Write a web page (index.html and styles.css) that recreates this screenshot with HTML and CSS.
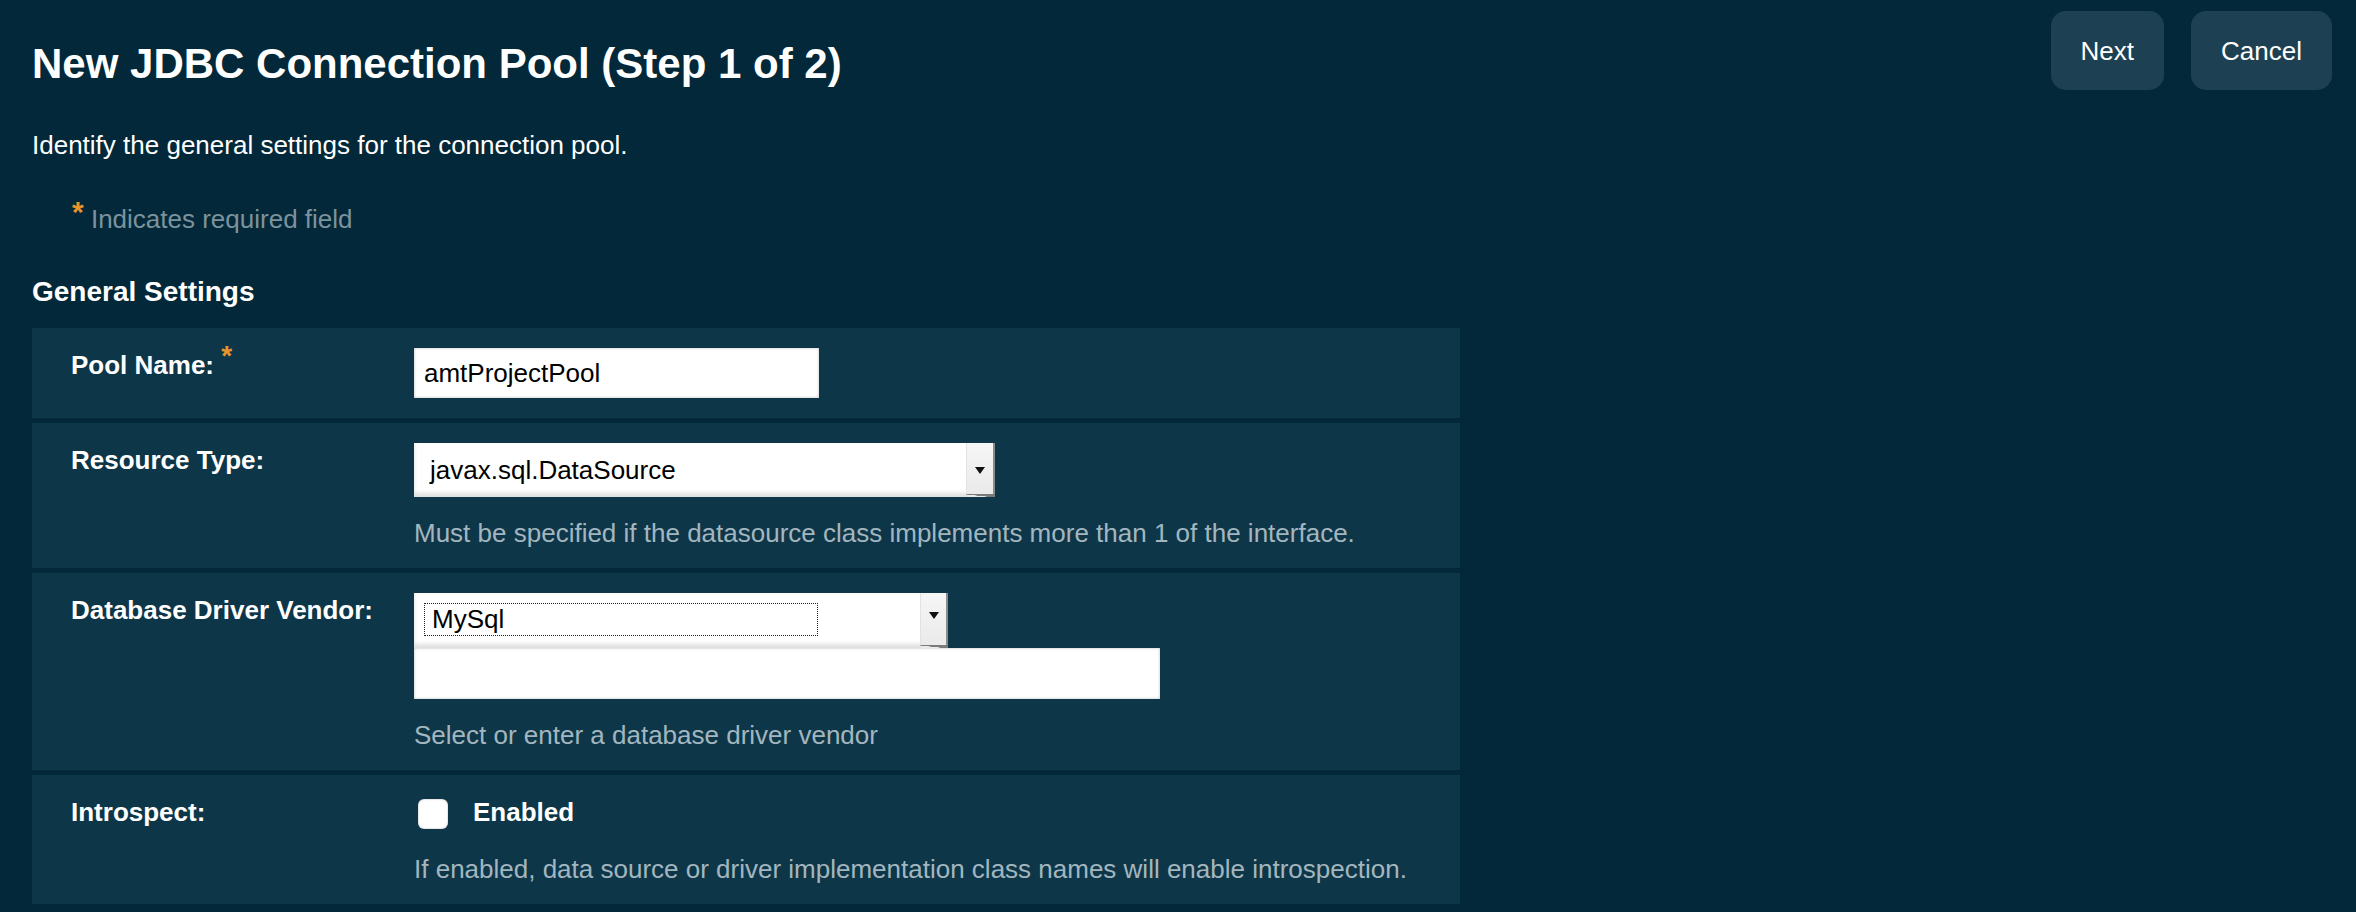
FILE: index.html
```html
<!DOCTYPE html>
<html lang="en">
<head>
<meta charset="utf-8">
<title>New JDBC Connection Pool (Step 1 of 2)</title>
<link rel="stylesheet" href="styles.css">
</head>
<body>
<div class="page">
  <header class="header">
    <h1 class="title">New JDBC Connection Pool (Step 1 of 2)</h1>
    <div class="actions">
      <button class="btn" type="button">Next</button>
      <button class="btn" type="button">Cancel</button>
    </div>
  </header>

  <p class="desc">Identify the general settings for the connection pool.</p>
  <p class="req-note"><span class="req-star">*</span> Indicates required field</p>

  <h2 class="section-title">General Settings</h2>

  <div class="panel">
    <div class="row">
      <div class="label">Pool Name: <span class="label-star">*</span></div>
      <div class="field">
        <input class="text-input pool-input" type="text" value="amtProjectPool">
      </div>
    </div>

    <div class="row">
      <div class="label">Resource Type:</div>
      <div class="field">
        <div class="select resource-select">
          <span class="select-value">javax.sql.DataSource</span>
          <span class="select-btn"><span class="arrow"></span></span>
        </div>
        <div class="help">Must be specified if the datasource class implements more than 1 of the interface.</div>
      </div>
    </div>

    <div class="row">
      <div class="label">Database Driver Vendor:</div>
      <div class="field">
        <div class="select vendor-select">
          <span class="focus-box">MySql</span>
          <span class="select-btn"><span class="arrow"></span></span>
        </div>
        <input class="text-input vendor-input" type="text" value="">
        <div class="help">Select or enter a database driver vendor</div>
      </div>
    </div>

    <div class="row">
      <div class="label">Introspect:</div>
      <div class="field">
        <label class="check-line">
          <span class="checkbox"></span>
          <span class="check-text">Enabled</span>
        </label>
        <div class="help help-check">If enabled, data source or driver implementation class names will enable introspection.</div>
      </div>
    </div>
  </div>
</div>
</body>
</html>
```

FILE: styles.css
```css
* {
  box-sizing: border-box;
}

html, body {
  margin: 0;
  padding: 0;
}

body {
  width: 2356px;
  height: 912px;
  overflow: hidden;
  background: #02283a;
  color: #ffffff;
  font-family: "Liberation Sans", Arial, Helvetica, sans-serif;
  font-size: 26px;
  line-height: 30px;
}

.page {
  padding: 0 24px 0 32px;
}

.header {
  display: flex;
  justify-content: space-between;
  align-items: flex-start;
  height: 90px;
}

.title {
  margin: 40px 0 0;
  font-size: 42px;
  line-height: 48px;
  font-weight: bold;
}

.actions {
  display: flex;
  gap: 27px;
  margin-top: 11px;
}

.btn {
  height: 79px;
  padding: 0 30px;
  border: none;
  border-radius: 15px;
  background: #1d4153;
  color: #ffffff;
  font-family: inherit;
  font-size: 26px;
  line-height: 30px;
}

.desc {
  margin: 40px 0 0;
  height: 30px;
}

.req-note {
  margin: 44px 0 0;
  height: 30px;
  padding-left: 40px;
  color: #7c939d;
}

.req-star {
  color: #e8952c;
  font-size: 30px;
  font-weight: bold;
  line-height: 0;
  vertical-align: 6px;
}

.section-title {
  margin: 42px 0 0;
  font-size: 28px;
  line-height: 32px;
  font-weight: bold;
}

.panel {
  margin-top: 20px;
  width: 1428px;
  display: flex;
  flex-direction: column;
  gap: 5px;
}

.row {
  display: grid;
  grid-template-columns: 382px 1fr;
  background: #0e3649;
  padding: 20px 0 20px;
}

.label {
  padding-left: 39px;
  margin-top: 2px;
  height: 30px;
  font-weight: bold;
}

.label-star {
  color: #e8952c;
  font-size: 28px;
  line-height: 0;
  vertical-align: 9px;
}

.field {
  display: flex;
  flex-direction: column;
  align-items: flex-start;
}

.text-input {
  display: block;
  border: none;
  outline: none;
  margin: 0;
  background: #ffffff;
  color: #000000;
  font-family: inherit;
  font-size: 26px;
  line-height: 30px;
  padding: 0 10px;
  box-shadow: inset 0 0 3px rgba(0, 0, 0, 0.28);
}

.pool-input {
  width: 405px;
  height: 50px;
}

.vendor-input {
  width: 746px;
  height: 51px;
}

.select {
  position: relative;
  display: flex;
  align-items: center;
  background: #ffffff;
  color: #000000;
  box-shadow: inset 0 -4px 4px rgba(0, 0, 0, 0.13);
}

.resource-select {
  width: 581px;
  height: 54px;
  padding-left: 16px;
}

.vendor-select {
  width: 534px;
  height: 55px;
  padding-left: 10px;
  align-items: flex-start;
  padding-top: 10px;
}

.focus-box {
  display: block;
  width: 394px;
  height: 33px;
  border: 1px dotted #222;
  padding-left: 7px;
  line-height: 31px;
}

.select-btn {
  position: absolute;
  top: 0;
  right: 0;
  bottom: 0;
  width: 29px;
  background: linear-gradient(#f6f6f6, #e9e9e9);
  border-right: 2px solid #8b8b8b;
  border-left: 1px solid #e2e2e2;
  display: flex;
  align-items: center;
  justify-content: center;
}

.select-btn::after {
  content: "";
  position: absolute;
  left: -1px;
  right: -2px;
  bottom: 0;
  height: 3px;
  background: linear-gradient(to top right, transparent 40%, #7a7a7a 45%);
}

.vendor-select .select-btn {
  width: 28px;
}

.arrow {
  width: 0;
  height: 0;
  border-left: 5px solid transparent;
  border-right: 5px solid transparent;
  border-top: 7px solid #111;
}

.vendor-select .arrow {
  margin-top: -10px;
}

.help {
  margin-top: 21px;
  color: #a3b6bf;
}

.help-check {
  margin-top: 25px;
}

.check-line {
  display: flex;
  align-items: flex-start;
  height: 34px;
}

.checkbox {
  display: block;
  width: 30px;
  height: 30px;
  margin: 4px 0 0 4px;
  background: #ffffff;
  border-radius: 6px;
  box-shadow: inset 0 0 2px rgba(0, 0, 0, 0.35);
}

.check-text {
  margin: 2px 0 0 25px;
  font-weight: bold;
}
```
